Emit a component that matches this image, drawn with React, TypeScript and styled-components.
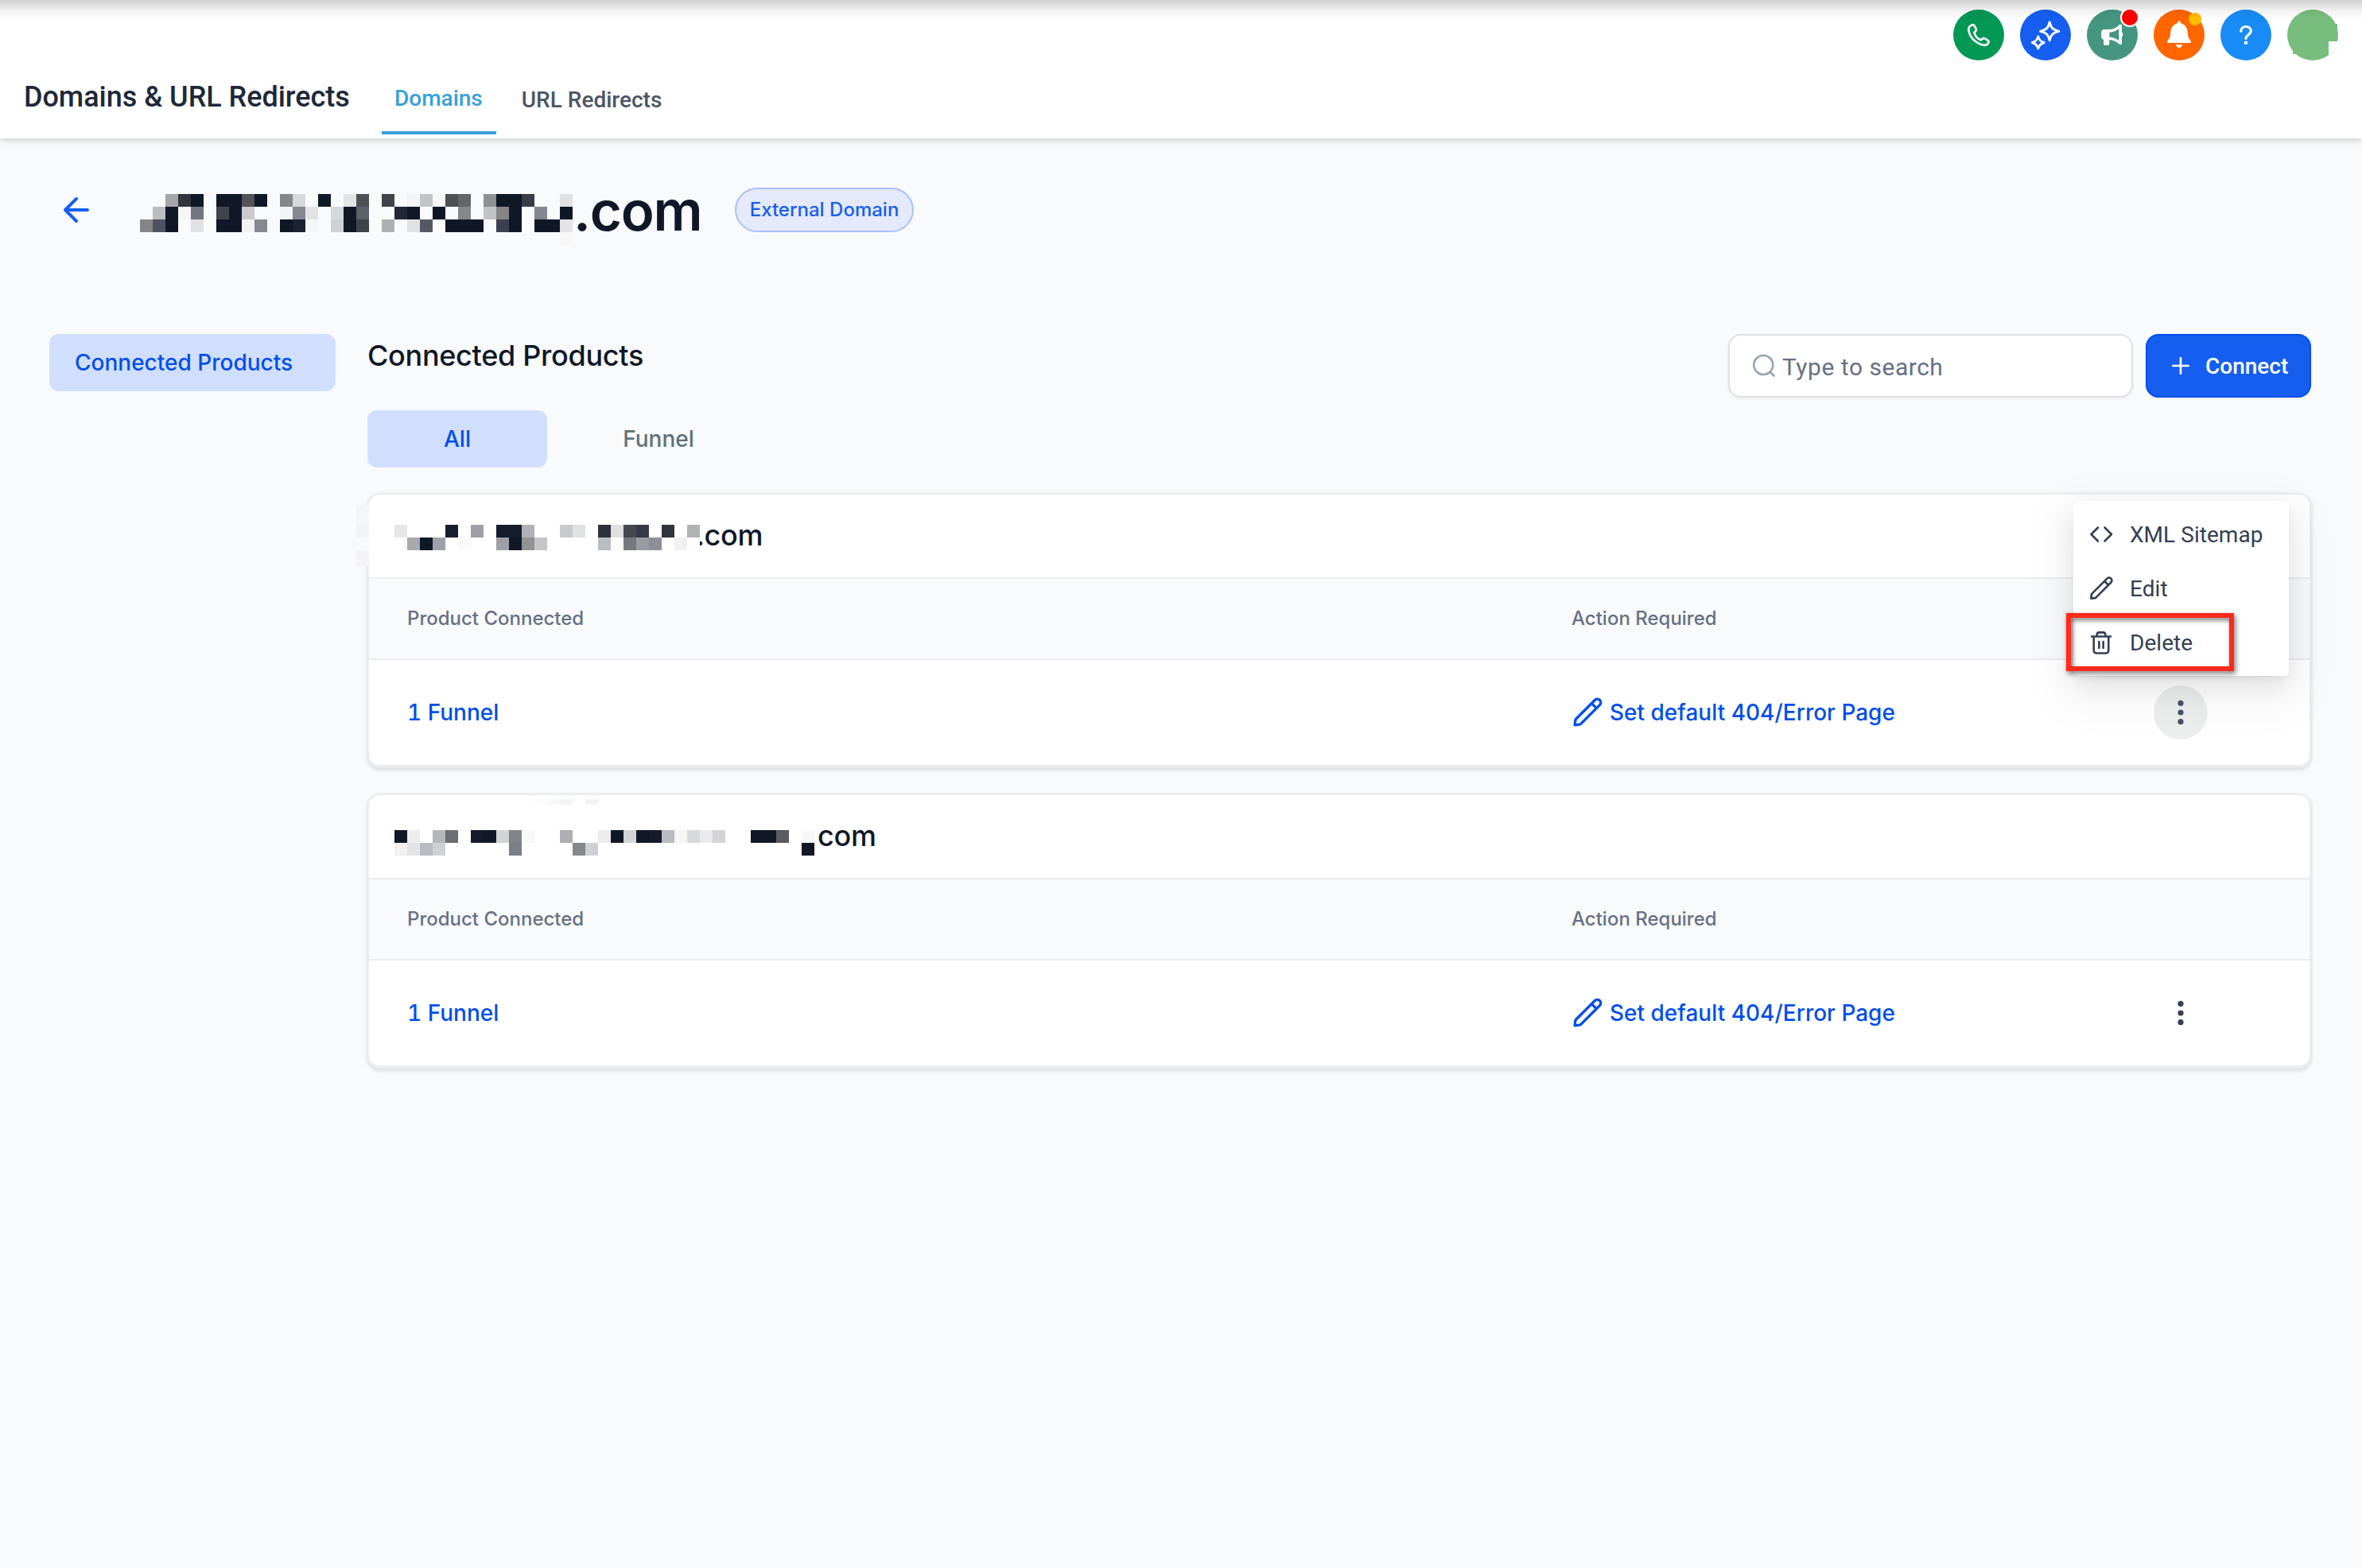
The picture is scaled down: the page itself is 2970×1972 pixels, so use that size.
import React from "react";
import styled, { createGlobalStyle, css } from "styled-components";

const INTER = `Inter, "Liberation Sans", sans-serif`;
const ROBOTO = `Roboto, "Liberation Sans", sans-serif`;
const INK = "#101828";

const GlobalStyle = createGlobalStyle`
  *, *::before, *::after { box-sizing: border-box; }
  body { margin: 0; background: #f9fafc; }
  button { font: inherit; border: 0; background: none; padding: 0; }
`;

const Page = styled.div`
  min-height: 1972px;
  background: #f9fafc;
  font-family: ${INTER};
  color: ${INK};
`;

/* ---------- header ---------- */

const Header = styled.header`
  position: relative;
  display: grid;
  grid-template-rows: 76px 98px;
  height: 174px;
  background: #fff;
  box-shadow: 0 2px 6px rgba(0, 0, 0, 0.1), 0 2px 12px rgba(0, 0, 0, 0.1);

  &::after {
    content: "";
    position: absolute;
    inset: 0 0 auto 0;
    height: 28px;
    background: linear-gradient(
      rgba(0, 0, 0, 0.19),
      rgba(0, 0, 0, 0.14) 18%,
      rgba(0, 0, 0, 0.06) 45%,
      rgba(0, 0, 0, 0.015) 75%,
      rgba(0, 0, 0, 0)
    );
  }
`;

const Actions = styled.div`
  display: flex;
  justify-content: flex-end;
  gap: 20px;
  padding: 12px 30px 0 0;
`;

const RoundButton = styled.button<{ $color: string }>`
  position: relative;
  display: flex;
  width: 64px;
  height: 64px;
  border-radius: 50%;
  background: ${(p) => p.$color};
  color: #fff;

  svg {
    display: block;
    width: 64px;
    height: 64px;
  }
`;

const Badge = styled.span<{ $color: string; $size: number; $top: number; $right: number; $ring?: boolean }>`
  position: absolute;
  top: ${(p) => p.$top}px;
  right: ${(p) => p.$right}px;
  width: ${(p) => p.$size}px;
  height: ${(p) => p.$size}px;
  border-radius: 50%;
  background: ${(p) => p.$color};
  ${(p) => p.$ring && css`box-shadow: 0 0 0 2px #fff;`}
`;

const Avatar = styled.svg`
  display: block;
  width: 64px;
  height: 64px;
`;

const Nav = styled.nav`
  display: flex;
  align-items: flex-start;
  padding-left: 30px;
  font-family: ${ROBOTO};
`;

const NavTitle = styled.h1`
  margin: 0;
  padding-top: 24px;
  width: 450px;
  font-size: 36px;
  line-height: 44px;
  font-weight: 500;
  letter-spacing: -0.03px;
  white-space: nowrap;
  color: #1d2939;
`;

const NavTab = styled.a<{ $active?: boolean }>`
  height: 93px;
  margin-right: 16px;
  padding: ${(p) => (p.$active ? 32 : 34)}px 17px 0 16px;
  font-size: 28px;
  line-height: 32px;
  font-weight: 500;
  white-space: nowrap;
  color: ${(p) => (p.$active ? "#38a0db" : "#4b5565")};
  border-bottom: 4px solid ${(p) => (p.$active ? "#38a0db" : "transparent")};
`;

/* ---------- domain title ---------- */

const TitleRow = styled.section`
  display: flex;
  align-items: center;
  height: 80px;
  margin-top: 50px;
  padding-left: 76px;
`;

const BackIcon = styled.svg`
  display: block;
  width: 40px;
  height: 40px;
  margin-right: 60px;
`;

const DomainTitle = styled.h2`
  display: flex;
  align-items: center;
  margin: 0;
  width: 748px;
  font-size: 69px;
  line-height: 80px;
  font-weight: 600;
  letter-spacing: -1.2px;
`;

const TitleSuffix = styled.span`
  padding-top: 2px;
`;

const Pill = styled.span`
  display: flex;
  align-items: center;
  justify-content: center;
  width: 225px;
  height: 56px;
  padding-bottom: 2px;
  border: 2px solid #a9c0f9;
  border-radius: 28px;
  background: #e4e9fb;
  font-size: 24px;
  font-weight: 500;
  color: #155eef;
`;

const Mosaic = styled.svg<{ $shift?: number }>`
  position: relative;
  z-index: 1;
  display: block;
  flex: none;
  margin-right: ${(p) => p.$shift ?? 0}px;
`;

/* ---------- main ---------- */

const Main = styled.main`
  display: grid;
  grid-template-columns: 360px 2444px;
  column-gap: 40px;
  align-items: start;
  padding: 116px 0 0 62px;
`;

const SideItem = styled.a`
  display: flex;
  align-items: center;
  height: 72px;
  padding-left: 32px;
  border-radius: 12px;
  background: #d1dffe;
  font-size: 28px;
  font-weight: 500;
  color: #004eeb;
`;

const Toolbar = styled.div`
  display: flex;
  height: 96px;
`;

const Heading = styled.h3`
  flex: 1;
  margin: 0;
  padding-top: 5px;
  font-size: 36px;
  line-height: 44px;
  font-weight: 500;
  letter-spacing: -0.3px;
`;

const SearchBox = styled.label`
  display: flex;
  align-items: center;
  width: 509px;
  height: 80px;
  padding-left: 27px;
  border: 2px solid #dfe1e6;
  border-radius: 16px;
  background: #fff;
  box-shadow: 0 2px 4px rgba(16, 24, 40, 0.05);
  font-family: ${ROBOTO};
  font-size: 30px;
  letter-spacing: 0.52px;
  color: #667085;

  svg {
    display: block;
    width: 32px;
    height: 32px;
    margin-right: 7px;
  }

  span {
    padding-top: 3px;
  }
`;

const ConnectButton = styled.button`
  display: flex;
  align-items: center;
  width: 208px;
  height: 80px;
  margin-left: 16px;
  border: 2px solid #004eeb;
  border-radius: 16px;
  background: #155eef;
  box-shadow: 0 2px 4px rgba(16, 24, 40, 0.05);
  color: #fff;
  font-family: ${ROBOTO};
  font-size: 28px;
  font-weight: 500;

  svg {
    display: block;
    width: 32px;
    height: 32px;
    margin: 0 15px 0 26px;
  }
`;

const Filters = styled.div`
  display: flex;
  gap: 27px;
  margin-bottom: 32px;
`;

const FilterTab = styled.button<{ $active?: boolean }>`
  width: 226px;
  height: 72px;
  border-radius: 12px;
  font-size: 28px;
  font-weight: 500;
  text-align: center;
  background: ${(p) => (p.$active ? "#d1dffe" : "transparent")};
  color: ${(p) => (p.$active ? "#004eeb" : "#607179")};
`;

const Card = styled.article`
  margin-bottom: 32px;
  height: 346px;
  border: 2px solid #eaecf0;
  border-radius: 16px;
  background: #fff;
  box-shadow: 0 2px 6px rgba(16, 24, 40, 0.1), 0 2px 4px rgba(16, 24, 40, 0.06);
`;

const CardTitle = styled.div`
  position: relative;
  display: flex;
  align-items: center;
  height: 106px;
  padding: 0 0 2px 32px;
  border-bottom: 2px solid #eaecf0;
  font-size: 36px;
  font-weight: 500;
  letter-spacing: -0.3px;
`;

const EdgeMosaic = styled.svg`
  position: absolute;
  left: -16px;
  top: 13px;
`;

const TopMosaic = styled.svg`
  position: absolute;
  left: 64px;
  top: 5px;
`;

const Columns = styled.div`
  display: grid;
  grid-template-columns: 1464px 732px 1fr;
  align-items: center;
  padding-left: 48px;
`;

const HeadRow = styled(Columns)`
  height: 102px;
  padding-bottom: 2px;
  border-bottom: 2px solid #eaecf0;
  background: #f9fafc;
  font-size: 24px;
  font-weight: 500;
  color: #667085;
`;

const BodyRow = styled(Columns)`
  height: 134px;
  border-bottom: 2px solid #eaecf0;
  border-radius: 0 0 14px 14px;
  font-size: 28px;
  font-weight: 500;
  color: #004eeb;
`;

const ProductCount = styled.a`
  font-variant-numeric: tabular-nums;
`;

const ActionLink = styled.a`
  display: flex;
  align-items: center;

  svg {
    display: block;
    width: 40px;
    height: 40px;
    margin-right: 8px;
  }
`;

const MenuAnchor = styled.div`
  position: relative;
  width: 68px;
  height: 68px;
`;

const MoreButton = styled.button<{ $open?: boolean }>`
  display: block;
  width: 68px;
  height: 68px;
  border-radius: 50%;
  background: ${(p) => (p.$open ? "#eceeed" : "transparent")};
  color: ${(p) => (p.$open ? "#475467" : "#344054")};

  svg {
    display: block;
  }
`;

const Menu = styled.div`
  position: absolute;
  z-index: 2;
  left: -101px;
  bottom: 80px;
  width: 271px;
  height: 220px;
  padding: 8px 0;
  border-radius: 6px;
  background: #fff;
  box-shadow: 0 6px 12px -8px rgba(0, 0, 0, 0.12), 0 12px 32px 0 rgba(0, 0, 0, 0.08),
    0 18px 56px 16px rgba(0, 0, 0, 0.05);
  font-family: ${ROBOTO};
  font-size: 28px;
  font-weight: 400;
  color: #344054;
`;

const MenuItem = styled.div`
  display: flex;
  align-items: center;
  height: 68px;
  padding-left: 19px;
  letter-spacing: 0.05px;
  white-space: nowrap;

  svg {
    display: block;
    width: 32px;
    height: 32px;
    margin-right: 20px;
  }
`;

const Highlight = styled.div`
  position: absolute;
  left: -9px;
  top: 141px;
  width: 211px;
  height: 73px;
  border: 6px solid #ff2a1a;
  filter: drop-shadow(2px 3px 3px rgba(0, 0, 0, 0.55));
`;

/* ---------- drawings ---------- */

type Cell = [number, string];
const K = INK;

const titleCells: Cell[][] = [
  [[2, "#a5a6a8"], [3, "#33343d"], [4, K], [6, K], [7, K], [8, "#525357"], [9, K], [11, "#858689"], [12, "#d7d8da"], [14, K], [16, "#e2e3e4"], [17, "#4f5055"], [19, "#42434b"], [21, "#f2f3f5"], [22, "#c2c3c5"], [23, "#f6f7f9"], [24, "#4f5055"], [25, "#646568"], [27, "#8f9092"], [28, K], [29, K], [30, "#3a3d48"], [33, "#e0e1e2"]],
  [[1, "#bcbdc0"], [2, K], [3, "#f5f6f8"], [4, "#727680"], [6, "#40454e"], [7, K], [8, "#c9cacc"], [11, "#f3f4f6"], [12, "#868790"], [13, "#e2e2e4"], [15, "#d6d9db"], [16, K], [17, "#5c6069"], [20, "#222837"], [21, K], [23, K], [25, "#868789"], [27, "#c1c2c4"], [28, "#858585"], [29, K], [31, "#858690"], [33, K]],
  [[0, "#858585"], [1, "#4c5462"], [2, K], [4, "#e0e1e3"], [6, K], [7, K], [8, "#f1f2f4"], [9, "#868890"], [10, "#f8f9fa"], [11, K], [12, "#1b2231"], [13, "#f5f6f8"], [15, "#cfd1d3"], [16, K], [17, "#40444e"], [19, "#aeafb1"], [21, "#e0e1e3"], [22, "#545962"], [24, K], [25, K], [26, K], [28, "#3b4150"], [29, K], [31, K], [32, K], [33, "#e4e4e6"]],
  [[33, "#f7f7f8"]],
];

const firstCells: Cell[][] = [
  [[0, "#e7e7e8"], [4, "#181f2e"], [6, "#9fa0a7"], [8, "#151d2c"], [9, "#151d2c"], [10, "#b1b2b7"], [13, "#c9cacd"], [14, "#e1e2e4"], [16, "#2c313c"], [17, "#dfdfe0"], [18, "#46484f"], [19, "#363947"], [21, "#30343f"], [23, "#b1b2b4"]],
  [[1, "#a8a9ae"], [2, K], [3, "#9ea1a8"], [5, "#f8faf9"], [8, "#9fa0a5"], [9, K], [10, "#929294"], [11, "#c5c5c7"], [16, "#babec2"], [17, "#fdfdfd"], [18, "#77787c"], [19, "#9c9da4"], [20, "#8f9097"], [22, "#f1f1f1"]],
];

const secondCells: Cell[][] = [
  [[0, K], [1, "#ededee"], [3, "#b6b7bc"], [4, "#6d6e72"], [6, "#141b2b"], [7, K], [8, "#d3d4d6"], [9, "#838488"], [10, "#f8f8f9"], [13, "#aeafb4"], [16, "#ececee"], [17, K], [18, "#d3d4d6"], [19, K], [20, "#141b2b"], [21, "#babbc0"], [22, "#f6f6f7"], [23, "#d8d9db"], [24, "#ebebed"], [25, "#d3d4d6"], [28, K], [29, K], [30, "#5a5b60"], [32, "#f8f8f9"]],
  [[0, "#f1f1f1"], [1, "#e3e4e6"], [2, "#babbc2"], [3, "#cfd0d3"], [9, "#7b7f88"], [14, "#86878b"], [15, "#cfd0d3"], [32, K]],
];

function Redacted({ rows, cols, bg, offset = 0, shift }: { rows: Cell[][]; cols: number; bg: string; offset?: number; shift?: number }) {
  const h = rows.length * 16;
  return (
    <Mosaic width={cols * 16} height={h + offset} viewBox={`0 ${-offset} ${cols * 16} ${h + offset}`} shapeRendering="crispEdges" $shift={shift}>
      <rect width={cols * 16} height={h} fill={bg} />
      {rows.map((row, y) =>
        row.map(([x, fill]) => <rect key={`${x}-${y}`} x={x * 16} y={y * 16} width="16" height="16" fill={fill} />)
      )}
    </Mosaic>
  );
}

const PencilIcon = () => (
  <svg viewBox="0 0 24 24" fill="none" stroke="currentColor" strokeWidth="2" strokeLinecap="round" strokeLinejoin="round">
    <path d="M2.5 21.5l.4-3.5c.05-.5.2-.8.6-1.2L17.6 2.7a2.6 2.6 0 0 1 3.7 3.7L7.2 20.5c-.4.4-.7.6-1.2.6l-3.5.4zM15.2 5.2l3.6 3.6" />
  </svg>
);

const DotsIcon = () => (
  <svg width="68" height="68" viewBox="0 0 68 68" fill="currentColor">
    <circle cx="34" cy="22.3" r="3.6" />
    <circle cx="34" cy="34" r="3.6" />
    <circle cx="34" cy="45.7" r="3.6" />
  </svg>
);

const outline = { fill: "none", stroke: "currentColor", strokeLinecap: "round", strokeLinejoin: "round" } as const;

const HeaderActions = () => (
  <Actions>
    <RoundButton $color="#049855">
      <svg viewBox="0 0 64 64" {...outline} strokeWidth="2.6">
        <path d="M23.6 19.4c1.2-.5 2.4-.1 3 .9l2.1 3.9c.5 1 .3 2.2-.5 3l-1.8 1.600c1.300 4.600 4.300 8.100 8.500 9.400l2.100-1.600c.8-.6 1.900-.7 2.800-.1l3.800 2.300c1 .6 1.300 1.800.8 2.800-1.400 2.600-3.700 3.700-6.600 3.100-9.700-2-17-9.800-18.400-18.600-.5-3.100 1.300-5.400 4.200-6.700z" />
      </svg>
    </RoundButton>
    <RoundButton $color="#155eef">
      <svg viewBox="0 0 64 64" {...outline} strokeWidth="2.9">
        <path d="M37.2 15.800c1.700 7.300 4.200 9.800 11.600 11.500-7.400 1.700-9.900 4.200-11.600 11.500-1.700-7.300-4.200-9.800-11.600-11.500 7.400-1.700 9.900-4.200 11.600-11.500z" />
        <path d="M22.800 33.900c1.300 4.600 3 6.300 7.500 7.600-4.500 1.300-6.200 3-7.500 7.500-1.300-4.500-3-6.200-7.500-7.500 4.500-1.300 6.200-3 7.500-7.600z" />
      </svg>
    </RoundButton>
    <RoundButton $color="#459680">
      <svg viewBox="0 0 64 64" fill="currentColor">
        <path fillRule="evenodd" d="M42 18.4c1.1 0 2 .9 2 2v8.1c.9.4 1.4 1.5 1.4 2.8s-.5 2.4-1.4 2.8v8.3c0 1.6-1.8 2.2-3 1.2-3.6-3.2-8-5.2-12.7-5.6V43c0 1.200-.8 2-2 2h-3.200c-1.200 0-2-.8-2-2v-5.300c-1.700-.2-2.900-1.600-2.900-3.300V28.600c0-2 1.500-3.500 3.500-3.500h5.500c5.200 0 9.900-1.900 13.500-5.900.4-.5.8-.8 1.300-.8zM40.300 24c-3.600 2.900-7.600 4.500-12 4.900v5.600c4.400.4 8.400 1.900 12 4.700z" />
      </svg>
      <Badge $color="#ff0000" $size={20} $top={0} $right={0} $ring />
    </RoundButton>
    <RoundButton $color="#ff6600">
      <svg viewBox="0 0 64 64" fill="currentColor">
        <path d="M32 14.5a2.3 2.3 0 0 1 2.3 2.3v.6c4.6 1.1 8 5.1 8.3 10.1.3 5.2.5 7.8 4 11.8.9 1.1.3 2.7-1.1 2.7h-27c-1.4 0-2-1.6-1.1-2.7 3.5-4 3.7-6.6 4-11.8.3-5 3.7-9 8.3-10.1v-.6a2.3 2.3 0 0 1 2.3-2.3zM28.2 44h7.6c0 2.3-1.6 4.1-3.8 4.1s-3.8-1.8-3.8-4.1z" />
      </svg>
      <Badge $color="#ffbc00" $size={16} $top={4} $right={4} />
    </RoundButton>
    <RoundButton $color="#188bf6">
      <svg viewBox="0 0 64 64" {...outline} strokeWidth="3.2">
        <path d="M25.8 27.3c0-3.5 2.7-5.8 6.2-5.8s6.3 2.3 6.3 5.6c0 4.6-6.3 4.8-6.3 9.4" />
        <circle cx="32" cy="41.7" r="2.3" fill="currentColor" stroke="none" />
      </svg>
    </RoundButton>
    <Avatar viewBox="0 0 64 64">
      <circle cx="32" cy="32" r="32" fill="#77bd7e" />
      <path d="M7 48h12v8H7zM52 18h11v22H52z" fill="#77bd7e" />
      <path d="M52 40h11v16H52z" fill="#fafcfb" />
    </Avatar>
  </Actions>
);

const ActionsMenu = () => (
  <Menu>
    <MenuItem>
      <svg viewBox="0 0 32 32" {...outline} strokeWidth="2.6">
        <path d="M12 7.5L3.5 16l8.5 8.5M20.5 7.5L29 16l-8.5 8.5" />
      </svg>
      XML Sitemap
    </MenuItem>
    <MenuItem>
      <PencilIcon />
      Edit
    </MenuItem>
    <MenuItem>
      <svg viewBox="0 0 32 32" {...outline} strokeWidth="2.6">
        <path d="M4 8.5h24M10.7 8.3V6.2c0-1.8 1-2.8 2.8-2.8h5c1.8 0 2.8 1 2.8 2.8v2.1M6.7 8.7v17c0 2.6 1.2 3.8 3.8 3.8h11c2.6 0 3.8-1.2 3.8-3.8v-17M13.4 15v8M18.7 15v8" />
      </svg>
      Delete
    </MenuItem>
    <Highlight />
  </Menu>
);

function ProductCard({ title, open }: { title: React.ReactNode; open?: boolean }) {
  return (
    <Card>
      <CardTitle>{title}</CardTitle>
      <HeadRow>
        <span>Product Connected</span>
        <span>Action Required</span>
      </HeadRow>
      <BodyRow>
        <ProductCount>1 Funnel</ProductCount>
        <ActionLink>
          <PencilIcon />
          Set default 404/Error Page
        </ActionLink>
        <MenuAnchor>
          <MoreButton $open={open}>
            <DotsIcon />
          </MoreButton>
          {open && <ActionsMenu />}
        </MenuAnchor>
      </BodyRow>
    </Card>
  );
}

export default function App() {
  return (
    <Page>
      <GlobalStyle />
      <Header>
        <HeaderActions />
        <Nav>
          <NavTitle>Domains &amp; URL Redirects</NavTitle>
          <NavTab $active>Domains</NavTab>
          <NavTab>URL Redirects</NavTab>
        </Nav>
      </Header>

      <TitleRow>
        <BackIcon viewBox="0 0 40 40" {...outline} stroke="#155eef" strokeWidth="4">
          <path d="M34 20H6M20 6L6 20l14 14" />
        </BackIcon>
        <DomainTitle>
          <Redacted rows={titleCells} cols={34} bg="#f9fafc" offset={24} shift={1} />
          <TitleSuffix>.com</TitleSuffix>
        </DomainTitle>
        <Pill>External Domain</Pill>
      </TitleRow>

      <Main>
        <SideItem>Connected Products</SideItem>
        <div>
          <Toolbar>
            <Heading>Connected Products</Heading>
            <SearchBox>
              <svg viewBox="0 0 32 32" {...outline} stroke="#98a2b3" strokeWidth="2.6">
                <circle cx="15.3" cy="15" r="12" />
                <path d="M24 24l4.5 4.5" />
              </svg>
              <span>Type to search</span>
            </SearchBox>
            <ConnectButton>
              <svg viewBox="0 0 32 32" {...outline} strokeWidth="2.7">
                <path d="M16 6.3v19.4M6.3 16h19.4" />
              </svg>
              Connect
            </ConnectButton>
          </Toolbar>
          <Filters>
            <FilterTab $active>All</FilterTab>
            <FilterTab>Funnel</FilterTab>
          </Filters>
          <ProductCard
            open
            title={
              <>
                <EdgeMosaic width="16" height="77" shapeRendering="crispEdges">
                  <rect width="16" height="9" fill="#f3f4f6" />
                  <rect y="9" width="16" height="16" fill="#f5f6f7" />
                  <rect y="25" width="16" height="16" fill="#f2f3f5" />
                  <rect y="41" width="16" height="16" fill="#f8f9fb" />
                  <rect y="57" width="16" height="20" fill="#f4f4f6" />
                </EdgeMosaic>
                <Redacted rows={firstCells} cols={24} bg="#fff" offset={6} shift={-5} />
                .com
              </>
            }
          />
          <ProductCard
            title={
              <>
                <TopMosaic width="380" height="7" shapeRendering="crispEdges">
                  <path d="M144 0h16v7h-16z" fill="#fcfcfd" />
                  <path d="M160 0h16v7h-16z" fill="#f8f9fb" />
                  <path d="M176 0h16v7h-16zM208 0h16v7h-16z" fill="#f2f3f7" />
                </TopMosaic>
                <Redacted rows={secondCells} cols={33} bg="#fff" offset={18} shift={4} />
                com
              </>
            }
          />
        </div>
      </Main>
    </Page>
  );
}
